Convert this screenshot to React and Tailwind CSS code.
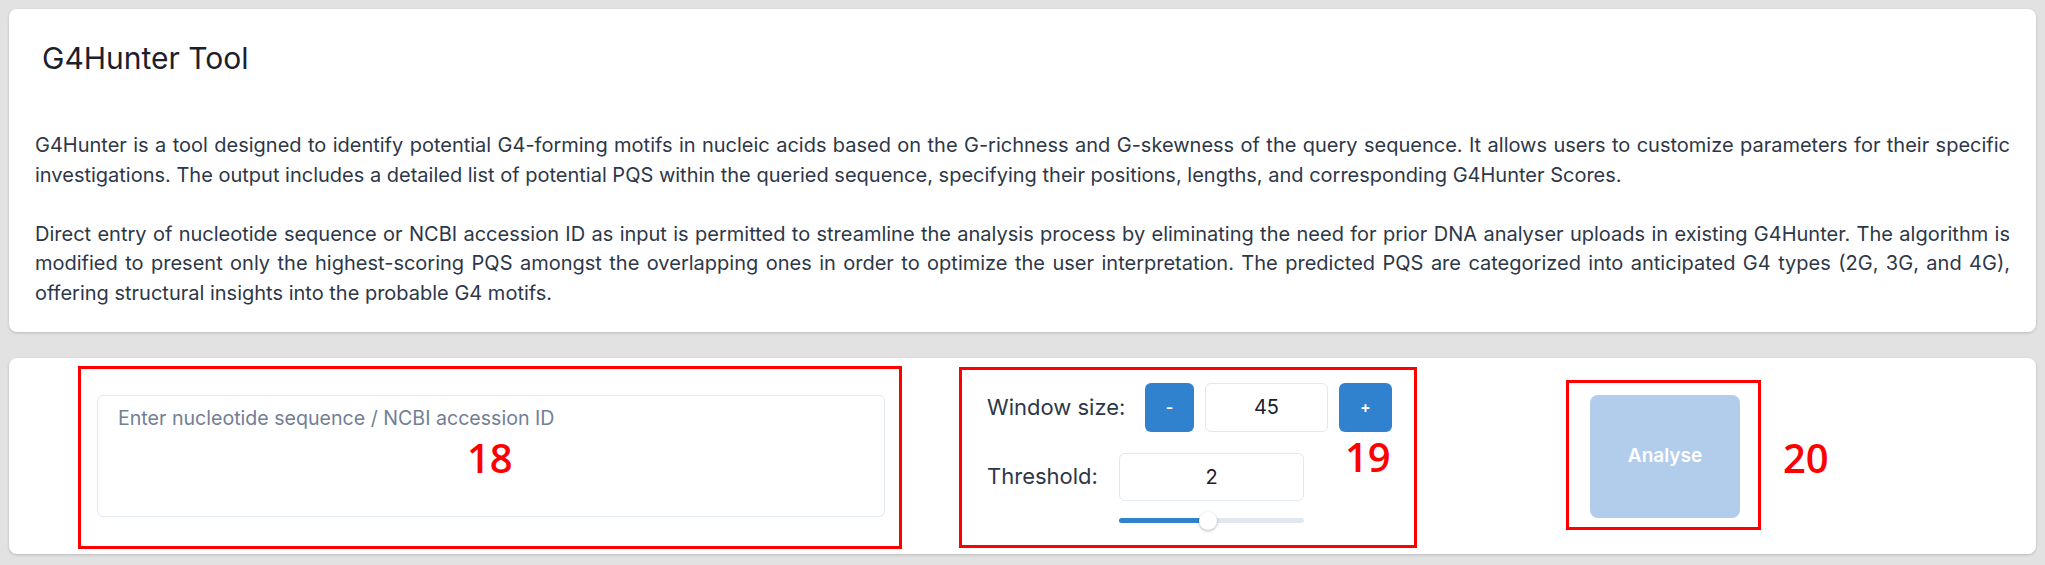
import React from 'react';

const intro = [
  'G4Hunter is a tool designed to identify potential G4-forming motifs in nucleic acids based on the G-richness and G-skewness of the query sequence. It allows users to customize parameters for their specific investigations. The output includes a detailed list of potential PQS within the queried sequence, specifying their positions, lengths, and corresponding G4Hunter Scores.',
  'Direct entry of nucleotide sequence or NCBI accession ID as input is permitted to streamline the analysis process by eliminating the need for prior DNA analyser uploads in existing G4Hunter. The algorithm is modified to present only the highest-scoring PQS amongst the overlapping ones in order to optimize the user interpretation. The predicted PQS are categorized into anticipated G4 types (2G, 3G, and 4G), offering structural insights into the probable G4 motifs.',
];

// red call-outs drawn over the screenshot
function Marker({ box, label, labelPos }) {
  return (
    <>
      <div className={`absolute border-[3px] border-[#ff0000] pointer-events-none ${box}`} />
      <span className={`absolute font-['Open_Sans',sans-serif] font-semibold text-[40px] leading-[40px] text-[#ff0000] ${labelPos}`}>
        {label}
      </span>
    </>
  );
}

export default function App() {
  const [windowSize, setWindowSize] = React.useState(45);
  const [threshold, setThreshold] = React.useState(2);

  return (
    <div className="relative min-h-screen bg-[#e2e2e2] p-[9px] font-['Inter',sans-serif] flex flex-col gap-[26px]">
      {/* Intro card */}
      <section className="rounded-lg bg-white shadow-[0_1px_3px_rgba(0,0,0,0.18)] px-[26px] pt-[31px] pb-[24px]">
        <h1 className="pl-[7px] text-[30px] leading-[36px] font-normal text-[#1a202c]">G4Hunter Tool</h1>
        <div className="mt-[55px] text-[20px] leading-[29.5px] text-[#2d3748] text-justify">
          <p>{intro[0]}</p>
          <p className="mt-[29.5px]">{intro[1]}</p>
        </div>
      </section>

      {/* Input card */}
      <section className="h-[196px] rounded-lg bg-white shadow-[0_1px_3px_rgba(0,0,0,0.18)] pl-[88px] flex items-center">
        <textarea
          placeholder="Enter nucleotide sequence / NCBI accession ID"
          className="w-[788px] h-[122px] resize-none rounded-md border border-[#e2e8f0] pl-[20px] pt-[9px] text-[19.6px] leading-[27px] text-[#1a202c] placeholder:text-[#718096] outline-none"
        />

        <div className="ml-[102px] flex flex-col gap-[21px]">
          <div className="flex items-center">
            <span className="w-[158px] text-[22px] text-[#2d3748]">Window size:</span>
            <button
              onClick={() => setWindowSize(windowSize - 1)}
              className="w-[49px] h-[49px] rounded-md bg-[#3182ce] text-white text-[16px] font-semibold"
            >
              -
            </button>
            <input
              value={windowSize}
              readOnly
              className="ml-[11px] w-[123px] h-[49px] rounded-md border border-[#e2e8f0] text-center text-[20px] text-[#1a202c] outline-none"
            />
            <button
              onClick={() => setWindowSize(windowSize + 1)}
              className="ml-[11px] w-[53px] h-[49px] rounded-md bg-[#3182ce] text-white text-[16px] font-semibold"
            >
              +
            </button>
          </div>

          <div className="flex">
            <span className="w-[132px] h-[48px] flex items-center text-[22px] text-[#2d3748]">Threshold:</span>
            <div className="flex flex-col">
              <input
                value={threshold}
                onChange={(e) => setThreshold(e.target.value)}
                className="w-[185px] h-[48px] rounded-md border border-[#e2e8f0] text-center text-[20px] text-[#1a202c] outline-none"
              />
              <div className="relative mt-[11px] h-[18px] flex items-center">
                <div className="w-full h-[5px] rounded-full bg-[#e2e8f0] flex">
                  <div className="w-[89px] h-full rounded-full bg-[#3182ce]" />
                </div>
                <div className="absolute left-[80px] top-0 w-[18px] h-[18px] rounded-full bg-white shadow-[0_1px_3px_rgba(0,0,0,0.3)]" />
              </div>
            </div>
          </div>
        </div>

        <button
          disabled
          className="ml-[198px] w-[150px] h-[123px] rounded-lg bg-[#b1cdeb] text-white text-[19px] font-semibold cursor-not-allowed"
        >
          Analyse
        </button>
      </section>

      <Marker box="left-[78px] top-[366px] w-[824px] h-[183px]" label="18" labelPos="left-[467px] top-[438px]" />
      <Marker box="left-[959px] top-[367px] w-[458px] h-[181px]" label="19" labelPos="left-[1345px] top-[437px]" />
      <Marker box="left-[1566px] top-[380px] w-[195px] h-[150px]" label="20" labelPos="left-[1783px] top-[438px]" />
    </div>
  );
}
